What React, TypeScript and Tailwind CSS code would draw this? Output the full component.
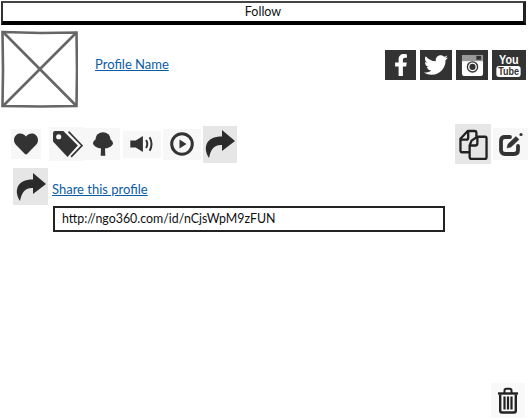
import React from 'react';
import { FaFacebookF, FaTwitter, FaHeart } from 'react-icons/fa';

const ShareIcon = () => (
    <svg viewBox="0 0 30 30" className="w-[30px] h-[30px] text-[#2b2b2b]" fill="currentColor">
        <path d="M17 1 L30 12 L17 22 L17 16 C10 15.5 6 19 4 29 C1 24 0 20 1.5 15.5 C3.5 10 9 7.5 17 7.5 Z" />
    </svg>
);

const IconBox: React.FC<{ className: string; children: React.ReactNode }> = ({ className, children }) => (
    <div className={`flex items-center justify-center shrink-0 ${className}`}>{children}</div>
);

const SocialBox: React.FC<{ className: string; children: React.ReactNode }> = ({ className, children }) => (
    <div className={`flex items-center justify-center h-[30px] bg-[#333333] text-white ${className}`}>{children}</div>
);

export default function App() {
    return (
        <div className="h-[420px] w-[530px] flex flex-col bg-white overflow-hidden font-['Lato',sans-serif] text-[#111]">
            {/* Follow */}
            <div className="mt-px ml-px w-[525px] h-[24px] flex items-center justify-center border-t-2 border-l-2 border-r-[3px] border-b-[4px] border-t-[#444] border-l-[#333] border-r-[#222] border-b-black bg-white text-[12.5px]">
                Follow
            </div>

            {/* Profile */}
            <div className="mt-[5px] flex items-start h-[78px] pl-px">
                <svg viewBox="0 0 77 78" className="w-[77px] h-[78px] shrink-0" fill="none" stroke="#666666" strokeWidth="2.6">
                    <path d="M1.5 2 L40 3 L75.5 2.5 L76 40 L75.5 76 L40 76.5 L1.5 76 L2 40 Z" />
                    <path d="M2 2 L75.5 76 M75.5 2.5 L2 76" />
                </svg>
                <a href="#" className="ml-[17px] mt-[26px] text-[13px] leading-[16px] text-[#0b5ca5] underline whitespace-nowrap">
                    Profile Name
                </a>
                <div className="mt-[20px] ml-auto mr-[4px] flex gap-[4px]">
                    <SocialBox className="w-[31px]">
                        <FaFacebookF size={22} />
                    </SocialBox>
                    <SocialBox className="w-[32px]">
                        <FaTwitter size={24} />
                    </SocialBox>
                    <SocialBox className="w-[32px]">
                        <svg viewBox="0 0 24 24" className="w-[23px] h-[23px]">
                            <rect x="1" y="1" width="22" height="22" rx="3" fill="#fff" />
                            <rect x="1" y="1" width="22" height="6.5" fill="#999" />
                            <rect x="16" y="2" width="5" height="4" fill="#333" />
                            <circle cx="12" cy="13.5" r="6" fill="#333" />
                            <circle cx="12" cy="13.5" r="4.6" fill="#fff" />
                            <circle cx="12" cy="13.5" r="3.2" fill="#333" />
                        </svg>
                    </SocialBox>
                    <SocialBox className="w-[34px] flex-col font-['Liberation_Sans',sans-serif] font-bold">
                        <span className="text-[12px] leading-[12px] scale-x-90">You</span>
                        <span className="text-[10px] leading-[11px] bg-white text-[#333] rounded-[3px] px-[2px] scale-x-90">Tube</span>
                    </SocialBox>
                </div>
            </div>

            {/* Actions */}
            <div className="mt-[16px] h-[40px] flex items-center pl-[11px] pr-[2px]">
                <IconBox className="w-[30px] h-[30px] bg-[#f7f7f7] text-[#333]">
                    <FaHeart size={24} />
                </IconBox>
                <IconBox className="ml-[8px] w-[36px] h-[34px] bg-[#f7f7f7] text-[#333]">
                    <svg viewBox="0 0 30 27" className="w-[31px] h-[28px]">
                        <path
                            fillRule="evenodd"
                            fill="currentColor"
                            d="M1 3 Q1 1 3 1 H11 L25 15 L15 26 L1 11 Z M6.5 4 A2.5 2.5 0 1 0 6.5 9 A2.5 2.5 0 1 0 6.5 4 Z"
                        />
                        <path d="M16 1.5 L29 15 L18.5 26" fill="none" stroke="currentColor" strokeWidth="1.6" />
                    </svg>
                </IconBox>
                <IconBox className="w-[35px] h-[32px] bg-[#f7f7f7] text-[#333]">
                    <svg viewBox="0 0 24 28" className="w-[20px] h-[26px]" fill="currentColor">
                        <ellipse cx="12" cy="8" rx="9" ry="8" />
                        <ellipse cx="12" cy="13" rx="12" ry="6.5" />
                        <path d="M9.8 16 H14.2 L14.8 28 H9.2 Z" />
                    </svg>
                </IconBox>
                <IconBox className="ml-[3px] w-[38px] h-[27px] bg-[#f7f7f7] text-[#333]">
                    <svg viewBox="0 0 26 20" className="w-[24px] h-[18px]" fill="currentColor">
                        <path d="M0 6 H6 L14 1 V19 L6 14 H0 Z" />
                        <path d="M17.5 5.5 C19 8 19 12 17.5 14.5 M21.5 2.5 C24 7 24 13 21.5 17.5" fill="none" stroke="currentColor" strokeWidth="2.2" />
                    </svg>
                </IconBox>
                <IconBox className="ml-[2px] w-[38px] h-[31px] bg-[#f7f7f7] text-[#333]">
                    <svg viewBox="0 0 24 24" className="w-[24px] h-[24px]">
                        <circle cx="12" cy="12" r="10.3" fill="none" stroke="currentColor" strokeWidth="3" />
                        <path d="M9.5 7.5 L16.5 12 L9.5 16.5 Z" fill="currentColor" />
                    </svg>
                </IconBox>
                <IconBox className="ml-[2px] w-[34px] h-[37px] bg-[#e6e6e6]">
                    <ShareIcon />
                </IconBox>
                <IconBox className="ml-auto w-[36px] h-[40px] bg-[#e6e6e6] text-[#222]">
                    <svg viewBox="0 0 30 32" className="w-[29px] h-[31px]" fill="none" stroke="currentColor" strokeWidth="2.4" strokeLinejoin="round">
                        <path d="M11 24 H3 Q1.5 24 1.5 22 V10 L9 2 H16 Q18 2 18 4 V8" />
                        <path d="M1.5 11 H8 Q9.5 11 9.5 9 V2" />
                        <path d="M13 12 L19 8 H27 Q28.5 8 28.5 10 V29 Q28.5 31 27 31 H13 Q11 31 11 29 V17 Z" fill="#e6e6e6" />
                        <path d="M11 17 H17 Q19 17 19 15 V8" />
                    </svg>
                </IconBox>
                <IconBox className="ml-[2px] w-[35px] h-[32px] bg-[#f7f7f7] text-[#333]">
                    <svg viewBox="0 0 26 26" className="w-[26px] h-[26px]" fill="none" stroke="currentColor">
                        <path d="M20 15 V19 Q20 23 16 23 H7 Q3 23 3 19 V10 Q3 6 7 6 H12" strokeWidth="3.8" strokeLinecap="round" />
                        <path d="M9 17 L10 13 L18 5.5 L21 8.5 L13 16 Z" fill="currentColor" strokeWidth="0.5" />
                        <circle cx="23" cy="3.5" r="1.6" fill="currentColor" stroke="none" />
                    </svg>
                </IconBox>
            </div>

            {/* Share */}
            <div className="mt-[4px] h-[37px] flex pl-[13px]">
                <IconBox className="w-[35px] h-[37px] bg-[#e6e6e6]">
                    <ShareIcon />
                </IconBox>
                <a href="#" className="ml-[4px] mt-[13px] text-[13px] leading-[16px] text-[#0b5ca5] underline whitespace-nowrap">
                    Share this profile
                </a>
            </div>
            <div className="mt-px ml-[53px] w-[392px] h-[26px] flex items-center pl-[7px] border-2 border-[#222] text-[12.4px] text-[#111] bg-white whitespace-nowrap">
                http://ngo360.com/id/nCjsWpM9zFUN
            </div>

            {/* Delete */}
            <div className="mt-auto mb-[2px] flex justify-end pr-[5px]">
                <IconBox className="w-[34px] h-[35px] bg-[#f9f9f9] text-[#222]">
                    <svg viewBox="0 0 20 26" className="w-[20px] h-[27px]" fill="none" stroke="currentColor">
                        <path d="M0 6 H20" strokeWidth="2.4" />
                        <path d="M6.5 5.5 V3 Q6.5 1.2 8.5 1.2 H11.5 Q13.5 1.2 13.5 3 V5.5" strokeWidth="2" />
                        <path d="M2.2 7 V23 Q2.2 25 4 25 H16 Q17.8 25 17.8 23 V7" strokeWidth="2.4" />
                        <path d="M6.5 9 V22 M10 9 V22 M13.5 9 V22" strokeWidth="2.2" />
                    </svg>
                </IconBox>
            </div>
        </div>
    );
}
